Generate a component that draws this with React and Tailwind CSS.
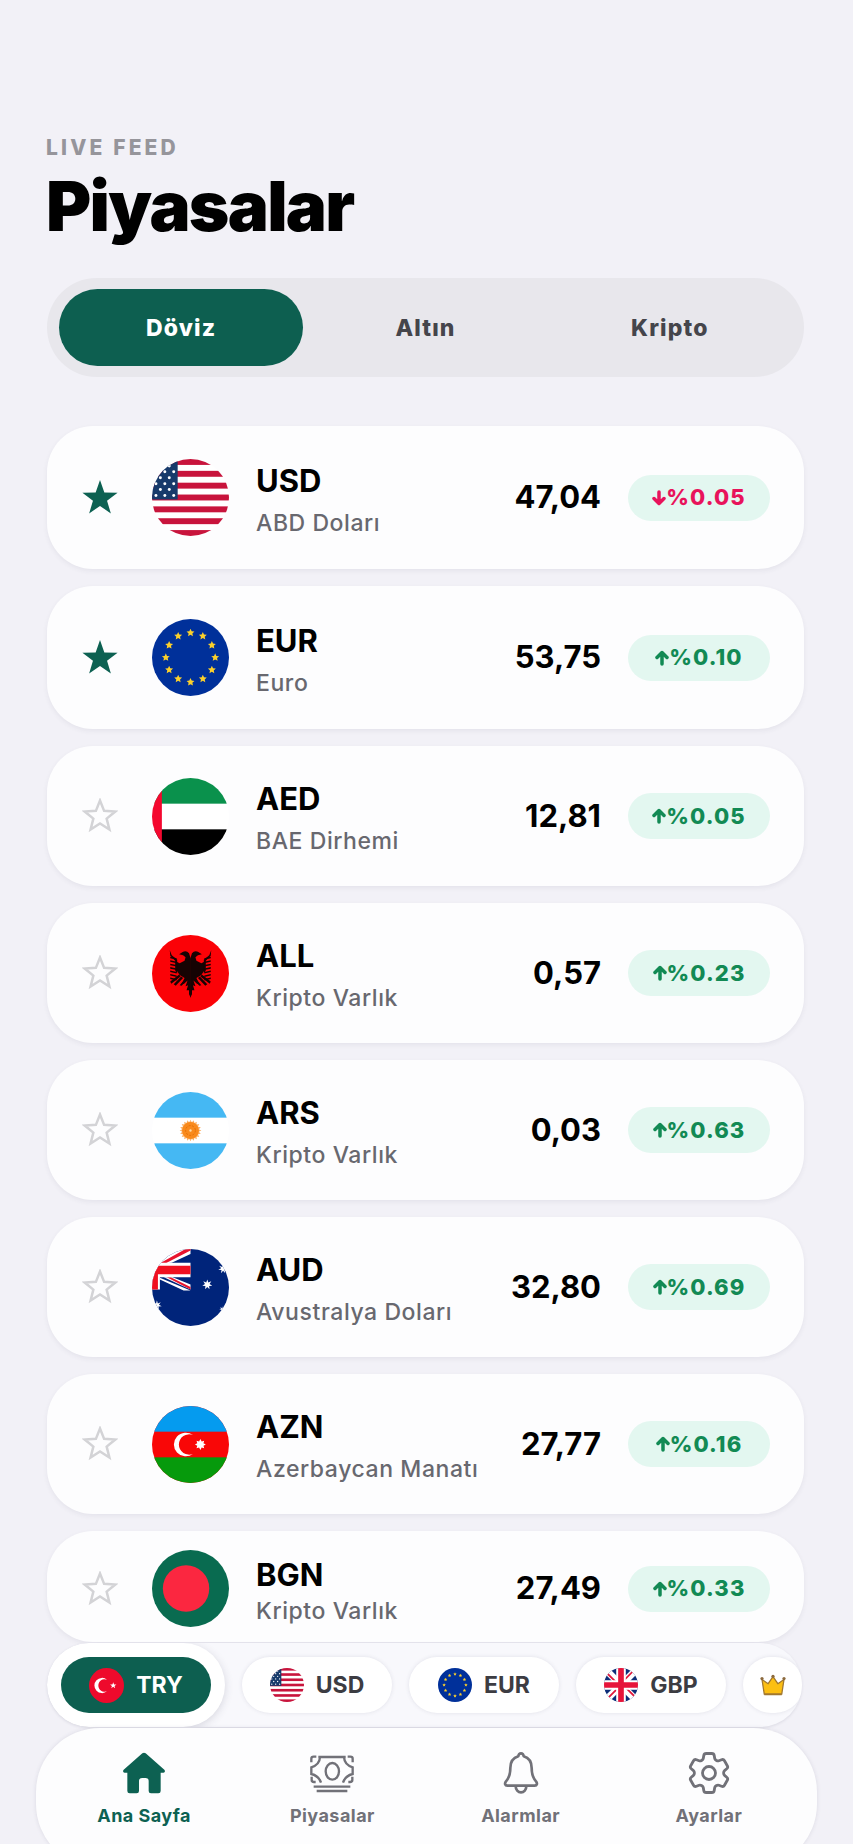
import React, { useState } from 'react';
import { HiOutlineCog6Tooth } from 'react-icons/hi2';

// Points of a star polygon around (cx, cy)
const starPoints = (cx, cy, outer, inner, tips = 5) =>
  Array.from({ length: tips * 2 }, (_, i) => {
    const r = i % 2 === 0 ? outer : inner;
    const a = (Math.PI * i) / tips - Math.PI / 2;
    return `${(cx + r * Math.cos(a)).toFixed(2)},${(cy + r * Math.sin(a)).toFixed(2)}`;
  }).join(' ');

const UsFlag = () => (
  <>
    <rect width="78" height="78" fill="#fff" />
    {[0, 2, 4, 6, 8, 10, 12].map((i) => (
      <rect key={i} y={i * 6} width="78" height="6" fill="#c8143c" />
    ))}
    <rect width="26" height="41" fill="#173a6b" />
    {[6, 12, 18, 24, 30, 36].map((y, row) =>
      (row % 2 ? [4, 13, 22] : [-1, 8.5, 17.5]).map((x) => (
        <circle key={`${x}-${y}`} cx={x} cy={y + 1} r="1.5" fill="#fff" />
      ))
    )}
  </>
);

const EuFlag = () => (
  <>
    <rect width="78" height="78" fill="#00309a" />
    {Array.from({ length: 12 }, (_, i) => {
      const a = (Math.PI * i) / 6;
      return (
        <polygon
          key={i}
          points={starPoints(39 + 25 * Math.sin(a), 39 - 25 * Math.cos(a), 4.2, 2)}
          fill="#fbd02c"
        />
      );
    })}
  </>
);

const AeFlag = () => (
  <>
    <rect width="78" height="78" fill="#fff" />
    <rect width="78" height="26" fill="#0a914c" />
    <rect y="52" width="78" height="26" fill="#000" />
    <rect width="10" height="78" fill="#f4082f" />
  </>
);

// Left half of the eagle, drawn twice to get the mirrored side
const EagleHalf = () => (
  <>
    <path d="M39.3 24 37.5 18.5Q35 15.5 31.5 17L27.5 19.5 31.5 20.5 34 22.5 33 26 28 28.5 24 26.5 25 36 28 40.5 33 43.5 30 50 32.5 49.5 36 46 34 52 36.5 51 35 56 37.5 56 37.5 60 39.3 63.5Z" />
    <path d="M18 15.5 20 20.5 25.5 25V39L23.5 36V26L18.5 21Z" />
    {[22, 25.5, 29, 32.5, 36, 39.5, 43].map((y) => (
      <path key={y} d={`M25 ${y + 1.5}L18.5 ${y}v1.6L25 ${y + 3}Z`} />
    ))}
    <path d="M27.5 40 18.5 47 19.5 49.5 29 42ZM29.5 42 22 50 24 51.5 31.5 43.5ZM33 45 28 51 30 51.5 35 46Z" />
  </>
);

const AlFlag = () => (
  <>
    <rect width="78" height="78" fill="#fb0207" />
    <g fill="#160303">
      <EagleHalf />
      <g transform="translate(78 0) scale(-1 1)">
        <EagleHalf />
      </g>
    </g>
  </>
);

const ArFlag = () => (
  <>
    <rect width="78" height="78" fill="#fff" />
    <rect width="78" height="26" fill="#45b8f3" />
    <rect y="52" width="78" height="26" fill="#45b8f3" />
    <polygon points={starPoints(39, 39, 11, 8.5, 20)} fill="#fbb36b" />
    <circle cx="39" cy="39" r="8.5" fill="#f98a1c" />
    <circle cx="39" cy="39" r="5" fill="none" stroke="#e27008" strokeWidth="1" strokeDasharray="2 1.5" />
    <circle cx="39" cy="39" r="1.2" fill="#ffd9a8" />
  </>
);

const AuFlag = () => (
  <>
    <rect width="78" height="78" fill="#00247a" />
    <path d="M0 0H39V5L20 14 8 15ZM39 41 12 28.5H21L39 36ZM8 29 39 42H32L8 31Z" fill="#fff" />
    <path d="M9 14 34 0H39V1.5L13 15ZM15 28.5H19L39 38.5V41Z" fill="#e8142e" />
    <path d="M0 14H39V28.5H8V41H0Z" fill="#fff" />
    <path d="M0 17H39V25.5H6V41H0Z" fill="#f01020" />
    <polygon points={starPoints(56, 36, 5.2, 2.4, 7)} fill="#fff" />
    <polygon points={starPoints(72, 20, 5, 2, 7)} fill="#fff" />
    <polygon points={starPoints(5, 57, 5, 2, 7)} fill="#fff" />
    <polygon points={starPoints(71, 61, 3, 1, 7)} fill="#fff" />
  </>
);

const AzFlag = () => (
  <>
    <rect width="78" height="78" fill="#f90707" />
    <rect width="78" height="26" fill="#059bef" />
    <rect y="52" width="78" height="26" fill="#069a0c" />
    <path d="M41.5 29.5a12 12 0 1 0 0 19a10.3 10.3 0 1 1 0-19Z" fill="#fff" />
    <polygon points={starPoints(49, 39, 5.5, 3.4, 8)} fill="#fff" />
  </>
);

const BdFlag = () => (
  <>
    <rect width="78" height="78" fill="#096b50" />
    <circle cx="34.5" cy="39" r="23.5" fill="#fb2740" />
  </>
);

const TrFlag = () => (
  <>
    <rect width="78" height="78" fill="#ee0a2c" />
    <path d="M40 26a17 17 0 1 0 0 26a14 14 0 1 1 0-26Z" fill="#fff" />
    <polygon points={starPoints(54, 39, 7.5, 3)} fill="#fff" />
  </>
);

const GbFlag = () => (
  <>
    <rect width="78" height="78" fill="#0c2d78" />
    <path d="M0 0 78 78M78 0 0 78" stroke="#fff" strokeWidth="16" />
    <path d="M0 5 35 40M43 38 78 73M74 0 40 34M36 42 0 78" stroke="#e0183c" strokeWidth="4" />
    <path d="M39 0V78M0 39H78" stroke="#fff" strokeWidth="22" />
    <path d="M39 0V78M0 39H78" stroke="#e6143a" strokeWidth="13" />
  </>
);

const flags = {
  us: UsFlag, eu: EuFlag, ae: AeFlag, al: AlFlag, ar: ArFlag,
  au: AuFlag, az: AzFlag, bd: BdFlag, tr: TrFlag, gb: GbFlag,
};

const Flag = ({ country, className }) => {
  const Drawing = flags[country];
  return (
    <svg viewBox="0 0 78 78" aria-hidden="true" className={`shrink-0 rounded-full ${className}`}>
      <Drawing />
    </svg>
  );
};

const StarIcon = ({ filled }) => (
  <svg viewBox="0 0 36 36" aria-hidden="true" className="size-9">
    <polygon
      points={filled ? starPoints(18, 18.5, 18.5, 7.4) : starPoints(18, 18.5, 16, 7)}
      fill={filled ? '#0d6152' : 'none'}
      stroke={filled ? 'none' : '#d3d3d6'}
      strokeWidth="2.5"
    />
  </svg>
);

const TrendArrow = ({ down }) => (
  <svg
    viewBox="0 0 14 16"
    aria-hidden="true"
    className={`h-4 w-3.5 ${down ? 'rotate-180' : ''}`}
    fill="none"
    stroke="currentColor"
    strokeWidth="3.5"
    strokeLinecap="round"
    strokeLinejoin="round"
  >
    <path d="M7 14V2.500M2 7.500 7 2.500 12 7.500" />
  </svg>
);

const HomeIcon = () => (
  <svg viewBox="0 0 126 126" aria-hidden="true" className="size-[42px]" fill="currentColor">
    <path d="M58 4q5-4 10 0l56 49q3 3 1 7-1 2-4 2h-8v55q0 7-7 7H84q-7 0-7-7V87q0-9-9-9H57q-9 0-9 9v30q0 7-7 7H20q-7 0-7-7V62H5q-3 0-4-2-2-4 1-7z" />
  </svg>
);

const MoneyIcon = () => (
  <svg viewBox="0 0 138 126" aria-hidden="true" className="h-[42px] w-[46px]" fill="none" stroke="currentColor" strokeWidth="7">
    <path d="M28 15H110M33 15Q32 38 7 46V66Q30 72 36 92M105 15Q106 38 131 46V66Q108 72 102 92" />
    <path d="M7 31V20q0-6 7-6h8M131 31V20q0-6-7-6h-8M8 74v10q0 6 7 6h5M130 74v10q0 6-7 6h-5" />
    <ellipse cx="70" cy="58" rx="20" ry="25" />
    <path d="M14 104H124M23 117H115" />
  </svg>
);

const BellIcon = () => (
  <svg viewBox="0 0 126 126" aria-hidden="true" className="size-[42px]" fill="none" stroke="currentColor" strokeWidth="8" strokeLinejoin="round">
    <path d="M55 13a8 9 0 0 1 16 0C88 18 95 31 95 48 95 70 99 78 108 88 113 94 111 101 104 101H22C15 101 13 94 18 88 27 78 31 70 31 48 31 31 38 18 55 13Z" />
    <path d="M47 103a16 18 0 0 0 32 0" />
  </svg>
);

const CrownIcon = () => (
  <svg viewBox="0 0 78 68" aria-hidden="true" className="h-[22px] w-[26px]">
    <path d="M12 62 5 17 24 30 39 8 54 30 73 17 66 62Z" fill="#fcbf12" stroke="#a1772f" strokeWidth="4" strokeLinejoin="round" />
    <path d="M12 63H66" stroke="#a1772f" strokeWidth="5" />
    <g fill="#8b6a3e">
      <circle cx="5" cy="14" r="5" />
      <circle cx="39" cy="7" r="5" />
      <circle cx="73" cy="14" r="5" />
    </g>
  </svg>
);

const rates = [
  { code: 'USD', name: 'ABD Doları', value: '47,04', change: '%0.05', down: true, flag: 'us', favorite: true },
  { code: 'EUR', name: 'Euro', value: '53,75', change: '%0.10', flag: 'eu', favorite: true },
  { code: 'AED', name: 'BAE Dirhemi', value: '12,81', change: '%0.05', flag: 'ae' },
  { code: 'ALL', name: 'Kripto Varlık', value: '0,57', change: '%0.23', flag: 'al' },
  { code: 'ARS', name: 'Kripto Varlık', value: '0,03', change: '%0.63', flag: 'ar' },
  { code: 'AUD', name: 'Avustralya Doları', value: '32,80', change: '%0.69', flag: 'au' },
  { code: 'AZN', name: 'Azerbaycan Manatı', value: '27,77', change: '%0.16', flag: 'az' },
  { code: 'BGN', name: 'Kripto Varlık', value: '27,49', change: '%0.33', flag: 'bd', compact: true },
];

const RateCard = ({ rate }) => {
  const [favorite, setFavorite] = useState(Boolean(rate.favorite));

  // The last row sits against the base currency bar and is lower than the rest
  let height = 'h-[140px]';
  if (rate.favorite) height = 'h-[143px]';
  if (rate.compact) height = 'h-[111px] pt-1';

  return (
    <li className={`flex shrink-0 items-center rounded-[46px] bg-[#fdfdfe] pr-[34px] pl-[35px] shadow-[0_2px_5px_rgba(60,60,90,0.07)] ${height}`}>
      <button
        type="button"
        aria-label={`${rate.code} favori`}
        aria-pressed={favorite}
        onClick={() => setFavorite(!favorite)}
      >
        <StarIcon filled={favorite} />
      </button>
      <Flag country={rate.flag} className="ml-[34px] size-[77px]" />
      <div className="ml-[27px] min-w-0 flex-1 pt-2">
        <div className={`text-[31px] font-bold text-black ${rate.compact ? 'leading-9' : 'leading-[42px]'}`}>{rate.code}</div>
        <div className={`truncate text-[23px] font-medium tracking-wide text-[#68686f] ${rate.compact ? 'leading-9' : 'leading-[42px]'}`}>{rate.name}</div>
      </div>
      <div className="text-[31px] font-bold text-black">{rate.value}</div>
      <div className={`ml-[27px] flex h-[46px] w-[142px] items-center justify-center rounded-full bg-[#e3f7f0] text-[22px] font-extrabold tracking-wider ${rate.down ? 'text-[#e8135b]' : 'text-[#128a54]'}`}>
        <TrendArrow down={rate.down} />
        <span>{rate.change}</span>
      </div>
    </li>
  );
};

const currencies = [
  { code: 'USD', flag: 'us' },
  { code: 'EUR', flag: 'eu' },
  { code: 'GBP', flag: 'gb' },
];

const navItems = [
  { label: 'Ana Sayfa', icon: <HomeIcon />, active: true },
  { label: 'Piyasalar', icon: <MoneyIcon /> },
  { label: 'Alarmlar', icon: <BellIcon /> },
  { label: 'Ayarlar', icon: <HiOutlineCog6Tooth className="-m-[5px] size-[52px]" strokeWidth={1.3} /> },
];

export default function App() {
  const [tab, setTab] = useState('Döviz');

  return (
    <div className="flex h-screen flex-col overflow-hidden bg-[#f2f1f7] font-[Inter,sans-serif]">
      <header className="px-[46px] pt-[134px]">
        <p className="text-[21px] leading-7 font-extrabold tracking-[0.15em] text-[#96959b]">LIVE FEED</p>
        <h1 className="text-[69px] leading-[88px] font-black tracking-tight text-black">Piyasalar</h1>
      </header>

      {/* Market type switch */}
      <div role="tablist" className="mr-[49px] ml-[47px] mt-7 grid grid-cols-3 rounded-full bg-[#e8e7ec] px-3 py-[11px]">
        {['Döviz', 'Altın', 'Kripto'].map((name) => (
          <button
            key={name}
            type="button"
            role="tab"
            aria-selected={tab === name}
            onClick={() => setTab(name)}
            className={`h-[77px] rounded-full pt-0.5 text-[23px] font-extrabold tracking-wider ${tab === name ? 'bg-[#0d5f50] text-white' : 'text-[#45454b]'}`}
          >
            {name}
          </button>
        ))}
      </div>

      <ul className="mr-[49px] ml-[47px] mt-[49px] flex min-h-0 flex-1 flex-col gap-[17px]">
        {rates.map((rate) => (
          <RateCard key={rate.code} rate={rate} />
        ))}
      </ul>

      {/* Base currency bar */}
      <div className="mr-[51px] ml-[47px] flex h-[84px] shrink-0 items-center gap-[17px] overflow-hidden rounded-full bg-[#f8f8fc] shadow-[0_1px_3px_rgba(60,60,90,0.12)]">
        <div className="shrink-0 rounded-full bg-white p-[14px] shadow-[0_2px_8px_rgba(60,60,90,0.18)]">
          <button type="button" className="flex h-14 w-[150px] items-center justify-center gap-3 rounded-full bg-[#0d5f50] text-[23px] font-bold text-white">
            <Flag country="tr" className="size-[35px]" />
            TRY
          </button>
        </div>
        {currencies.map((item) => (
          <button
            key={item.code}
            type="button"
            className="flex h-14 w-[150px] shrink-0 items-center justify-center gap-3 rounded-full bg-white text-[23px] font-bold text-[#3c3c42] shadow-[0_0_4px_rgba(60,60,90,0.12)]"
          >
            <Flag country={item.flag} className="size-[34px]" />
            {item.code}
          </button>
        ))}
        <button type="button" aria-label="Premium" className="flex h-14 w-[60px] shrink-0 items-center justify-center rounded-full bg-white shadow-[0_0_4px_rgba(60,60,90,0.12)]">
          <CrownIcon />
        </button>
      </div>

      <nav className="mx-9 mt-px -mb-6 grid h-[140px] shrink-0 grid-cols-4 items-start rounded-[64px] bg-[#fdfdfe] px-3.5 pt-6 shadow-[0_0_4px_rgba(60,60,90,0.12)]">
        {navItems.map((item) => (
          <a
            key={item.label}
            href="#"
            className={`flex flex-col items-center gap-2 text-[18px] leading-7 font-bold tracking-wide ${item.active ? 'text-[#0d6152]' : 'text-[#717178]'}`}
          >
            {item.icon}
            {item.label}
          </a>
        ))}
      </nav>
    </div>
  );
}
